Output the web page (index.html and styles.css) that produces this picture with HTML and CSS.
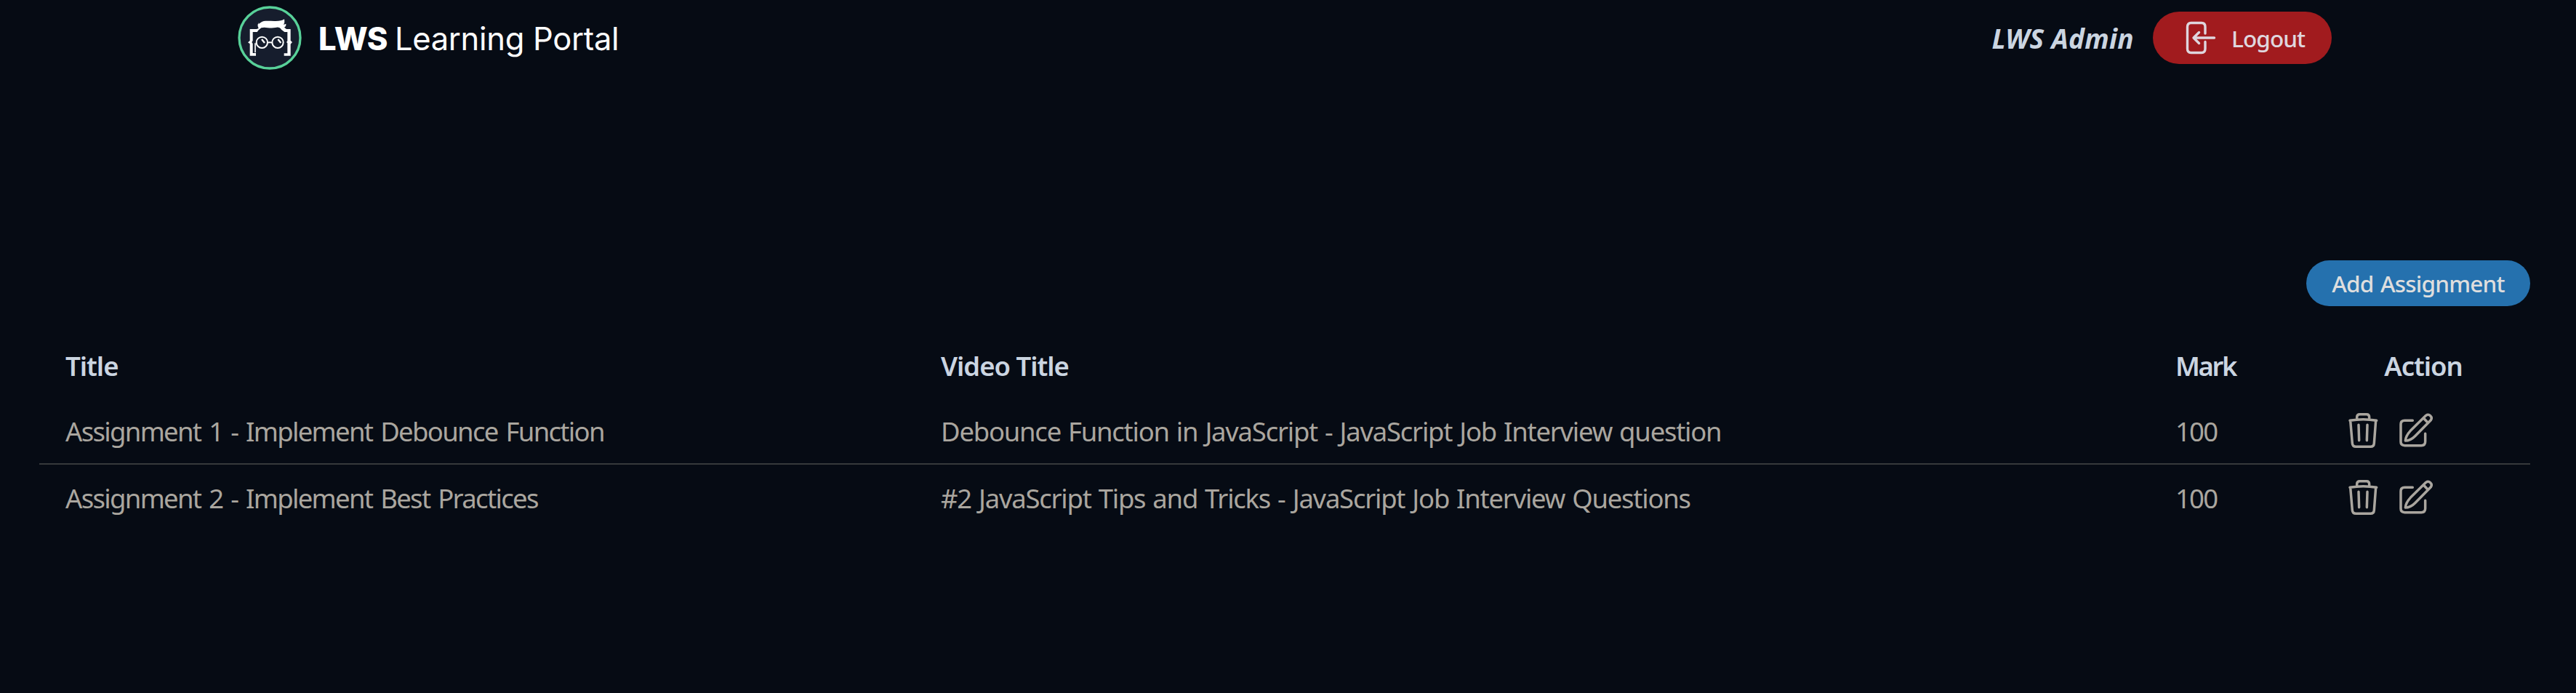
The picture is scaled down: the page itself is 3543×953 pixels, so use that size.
FILE: index.html
```
<!DOCTYPE html>
<html lang="en">
<head>
<meta charset="utf-8">
<title>LWS Learning Portal</title>
<link rel="stylesheet" href="styles.css">
</head>
<body>
<svg class="defs" aria-hidden="true">
  <symbol id="trash" viewBox="66 45 162 162">
    <path d="M96 85Q151 75 206 85M125 78V71Q125 59 137 59H165Q176 59 176 71V78M98 85L106 179Q107 193 121 193H181Q195 193 196 179L203 85M132 103L134 167M168 103L166 167"/>
  </symbol>
  <symbol id="edit" viewBox="282 45 162 162">
    <path d="M355 85H322Q306 85 306 101V172Q306 188 322 188H391Q407 188 407 172V139M410 64L346 127C334 140 326 154 325 168C340 168 352 162 365 149L430 83A14 14 0 0 0 410 64ZM400 75L417 93"/>
  </symbol>
</svg>
<nav class="navbar">
  <a class="brand">
    <svg class="logo" viewBox="50 24 264 264">
      <circle cx="182" cy="156" r="126" fill="#161d2d" stroke="#58d199" stroke-width="10"/>
      <path d="M136 117C131 106 131 98 138 92L135 100L146 92C158 83 185 88 207 87Q231 87 242 79Q245 93 239 102L249 98Q251 107 242 113L251 120H268V167L275 174L268 182V230H241V220H255V178L251 174L255 169V132H243L230 122Q222 109 205 114C180 119 164 109 147 115L136 124L130 132H112V168L108 174L112 180V219H125V230H100V181L92 175L100 168V120H128Z" fill="#fff"/>
      <path d="M122 217V178" stroke="#fff" stroke-width="5"/>
      <g fill="none" stroke="#fff" stroke-width="6"><circle cx="150" cy="175" r="23"/><circle cx="215" cy="175" r="23"/><path d="M173 176Q182 173 192 176"/></g>
      <path d="M149 162L161 177M216 162L228 177" stroke="#fff" stroke-width="7"/>
    </svg>
    <span class="brand-name"><b class="brand-lws">LWS</b><span class="brand-rest">Learning Portal</span></span>
  </a>
  <div class="account">
    <span class="user">LWS Admin</span>
    <button class="logout">
      <svg class="logout-icon" viewBox="0 0 44 46"><path d="M28 17V8Q28 2.5 23 2.5H8.5Q3.5 2.5 3.5 8V38Q3.5 43.5 8.5 43.5H23Q28 43.5 28 38V28.5M40.5 23H12M19.5 15.5L12 23L19.5 30.5"/></svg>
      <span class="logout-label">Logout</span>
    </button>
  </div>
</nav>
<main class="content">
  <div class="toolbar"><button class="add"><span class="add-label">Add Assignment</span></button></div>
  <div class="table">
    <div class="row head">
      <div class="cell">Title</div>
      <div class="cell">Video Title</div>
      <div class="cell mark">Mark</div>
      <div class="cell center">Action</div>
    </div>
    <div class="row line">
      <div class="cell title">Assignment 1 - Implement Debounce Function</div>
      <div class="cell video">Debounce Function in JavaScript - JavaScript Job Interview question</div>
      <div class="cell mark">100</div>
      <div class="cell actions"><svg class="icon"><use href="#trash"/></svg><svg class="icon"><use href="#edit"/></svg></div>
    </div>
    <div class="row">
      <div class="cell title">Assignment 2 - Implement Best Practices</div>
      <div class="cell video">#2 JavaScript Tips and Tricks - JavaScript Job Interview Questions</div>
      <div class="cell mark">100</div>
      <div class="cell actions"><svg class="icon"><use href="#trash"/></svg><svg class="icon"><use href="#edit"/></svg></div>
    </div>
  </div>
</main>
</body>
</html>
```
FILE: styles.css
```
* { box-sizing: border-box; }
body { margin: 0; background: #060b14; font-family: "Noto Sans", sans-serif; color: #aaa69f; }
.defs { display: none; }
.navbar { height: 104px; padding: 0 336px 0 327px; display: flex; align-items: center; justify-content: space-between; }
.brand { display: flex; align-items: center; gap: 23px; color: #fff; }
.logo { width: 88px; height: 88px; }
.brand-name { display: flex; align-items: baseline; gap: 10px; padding-top: 2px; font: 43.5px/60px Inter, sans-serif; }
.brand-lws { font-weight: 800; letter-spacing: -0.6px; }
.brand-rest { font-weight: 400; letter-spacing: -0.3px; }
.account { display: flex; align-items: center; gap: 26px; }
.user { padding-top: 1px; font-size: 37px; line-height: 50px; font-weight: 700; font-style: italic; letter-spacing: 0.3px; color: #cbd5e1; }
button { border: 0; font-family: inherit; display: flex; align-items: center; }
.logout { width: 246px; height: 72px; border-radius: 36px; padding: 0 0 0 44px; background: #a11b1e; color: #dfd6dd; gap: 20px; }
.logout-icon { width: 44px; height: 46px; }
.logout-icon path, .icon { fill: none; stroke: currentColor; stroke-width: 3.4; stroke-linecap: round; stroke-linejoin: round; }
.logout-label { font-size: 31.5px; font-weight: 500; letter-spacing: -0.9px; }
.content { padding: 254px 63px 0 54px; }
.toolbar { display: flex; justify-content: flex-end; }
.add { width: 308px; height: 63px; border-radius: 32px; background: #2571ae; color: #dedede; justify-content: center; padding: 0; }
.add-label { font-size: 31.5px; font-weight: 500; letter-spacing: -0.8px; word-spacing: 2px; }
.table { margin-top: 34px; font-size: 36.5px; line-height: 50px; }
.row { display: grid; grid-template-columns: 1204px 1698px 230px 294px; height: 92px; align-items: center; border-bottom: 2px solid transparent; }
.row.line { border-bottom-color: #36393b; }
.cell { padding: 2px 0 0 36px; white-space: nowrap; letter-spacing: -1.02px; }
.title { letter-spacing: -1.68px; word-spacing: 3px; }
.video { letter-spacing: -1.25px; word-spacing: 1.8px; }
.mark { letter-spacing: -1.8px; }
.head { font-weight: 600; color: #cbd5e1; }
.head .cell { padding-top: 5px; }
.head .mark { letter-spacing: -2.4px; }
.cell.center { padding-left: 0; text-align: center; }
.cell.actions { display: flex; gap: 18px; padding-top: 0; }
.icon { width: 54px; height: 54px; stroke-width: 10.5; }
```
